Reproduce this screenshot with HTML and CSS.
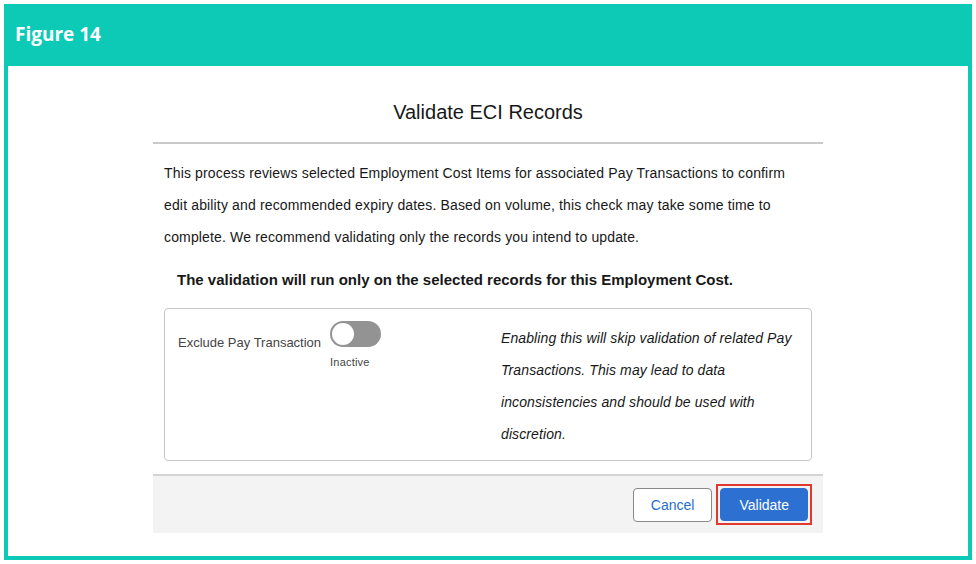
FILE: index.html
```html
<!DOCTYPE html>
<html lang="en">

<head>
    <meta charset="UTF-8">
    <title>Figure 14</title>
    <link rel="stylesheet" href="styles.css">
</head>

<body>
    <div class="frame">
        <div class="figure-head">Figure 14</div>
        <div class="modal">
            <h2 class="modal-title">Validate ECI Records</h2>
            <div class="modal-body">
                <p class="intro">This process reviews selected Employment Cost Items for associated Pay Transactions to confirm
                    edit ability and recommended expiry dates. Based on volume, this check may take some time to
                    complete. We recommend validating only the records you intend to update.</p>
                <p class="notice">The validation will run only on the selected records for this Employment Cost.</p>
                <div class="option-box">
                    <div class="option">
                        <span class="option-label">Exclude Pay Transaction</span>
                        <div class="toggle-wrap">
                            <span class="toggle"><span class="knob"></span></span>
                            <span class="toggle-state">Inactive</span>
                        </div>
                    </div>
                    <p class="hint">Enabling this will skip validation of related Pay Transactions. This may lead to data
                        inconsistencies and should be used with discretion.</p>
                </div>
            </div>
            <div class="modal-footer">
                <button class="btn btn-neutral">Cancel</button>
                <span class="highlight"><button class="btn btn-brand">Validate</button></span>
            </div>
        </div>
    </div>
</body>

</html>
```

FILE: styles.css
```css
body {
    margin: 0;
    background: #fff;
    font-family: "Liberation Sans", Arial, sans-serif;
    color: #181818;
}

.frame {
    margin: 4px;
    width: 968px;
    height: 556px;
    box-sizing: border-box;
    border: 4px solid #0ccab6;
    border-top: 0;
}

.figure-head {
    background: #0ccab6;
    height: 62px;
    margin: 0 -4px;
    padding-left: 11px;
    box-sizing: border-box;
    color: #fff;
    font-family: "Open Sans", sans-serif;
    font-weight: 700;
    font-size: 19px;
    line-height: 60px;
}

.modal {
    margin-left: 145px;
    width: 670px;
}

.modal-title {
    margin: 0;
    font-weight: 400;
    font-size: 20px;
    text-align: center;
    padding: 34px 0 18px;
    line-height: 24px;
    border-bottom: 2px solid #c9c9c9;
}

.modal-body {
    padding: 0 11px 13px;
}

.intro {
    margin: 13px 0 0;
    font-size: 14px;
    letter-spacing: 0.15px;
    line-height: 32px;
}

.notice {
    margin: 17px 0 0 13px;
    font-weight: 700;
    font-size: 15px;
    line-height: 20px;
}

.option-box {
    margin-top: 18px;
    border: 1px solid #c9c9c9;
    border-radius: 4px;
    height: 153px;
    box-sizing: border-box;
    display: flex;
    justify-content: space-between;
    padding: 12px 9px 0 13px;
}

.option {
    display: flex;
    align-items: flex-start;
    gap: 8px;
}

.option-label {
    font-size: 13px;
    color: #444;
    margin-top: 14px;
}

.toggle-wrap {
    display: flex;
    flex-direction: column;
    align-items: flex-start;
    gap: 9px;
    padding-left: 1px;
}

.toggle {
    width: 51px;
    height: 26px;
    border-radius: 13px;
    background: #939393;
    position: relative;
}

.knob {
    position: absolute;
    left: 2px;
    top: 2px;
    width: 22px;
    height: 22px;
    border-radius: 50%;
    background: #fff;
}

.toggle-state {
    font-size: 11px;
    letter-spacing: 0.2px;
    color: #444;
}

.hint {
    margin: 1px 0 0;
    width: 301px;
    font-size: 14px;
    letter-spacing: 0.1px;
    font-style: italic;
    line-height: 32px;
}

.modal-footer {
    background: #f3f3f3;
    border-top: 2px solid #d3d3d3;
    height: 59px;
    box-sizing: border-box;
    display: flex;
    justify-content: flex-end;
    align-items: center;
    gap: 4px;
    padding-right: 11px;
}

.btn {
    font-family: "Liberation Sans", Arial, sans-serif;
    font-size: 14px;
    height: 34px;
    border-radius: 4px;
    padding: 0 17px;
    cursor: pointer;
}

.btn-neutral {
    background: #fff;
    border: 1px solid #8a8a8a;
    color: #1f6fcf;
}

.highlight {
    border: 2px solid #e2392e;
    padding: 2px;
    display: flex;
}

.btn-brand {
    background: #2c70d2;
    border: 1px solid #2c70d2;
    color: #fff;
    height: 33px;
    padding: 0 18px;
}
```
